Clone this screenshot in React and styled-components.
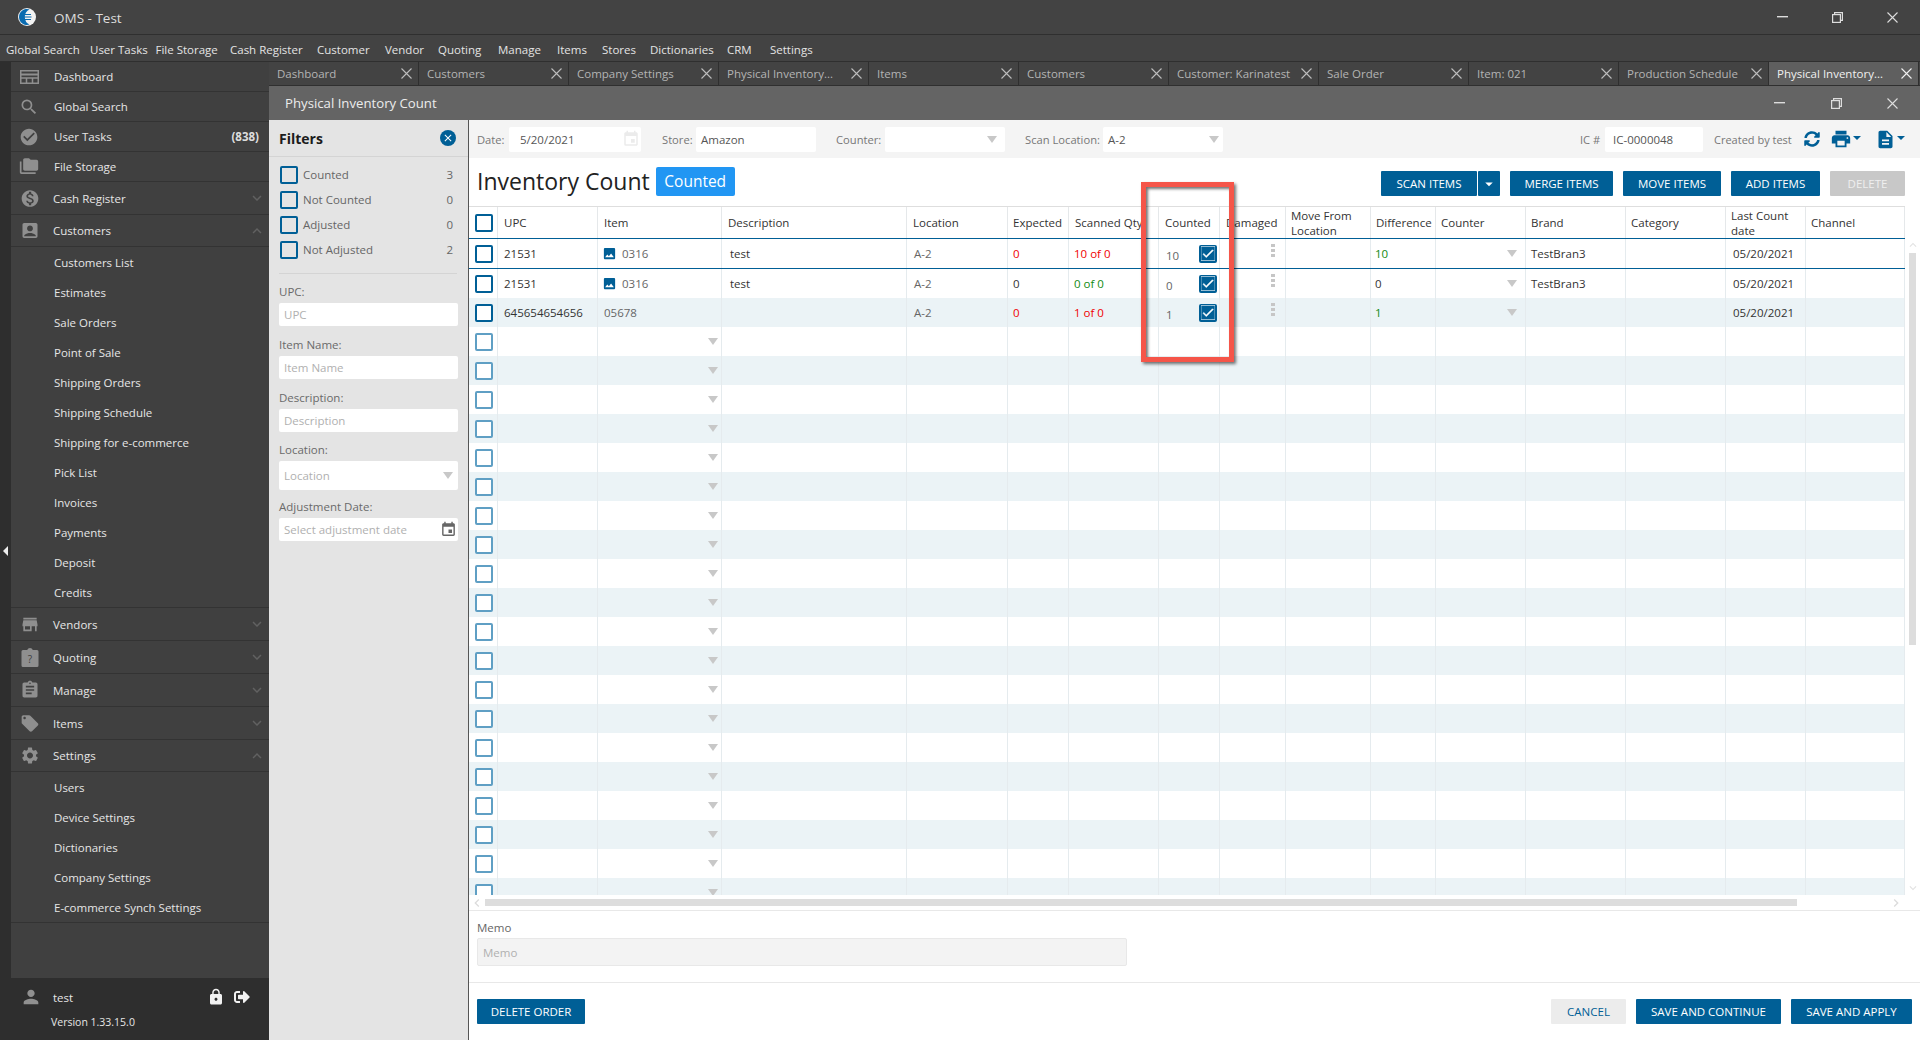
import React from "react";
import styled, { createGlobalStyle } from "styled-components";
import {
  MdSearch,
  MdCheckCircle,
  MdFolderCopy,
  MdMonetizationOn,
  MdAccountBox,
  MdStore,
  MdAssignment,
  MdLocalOffer,
  MdSettings,
  MdPerson,
  MdLock,
  MdPrint,
  MdDescription,
  MdImage,
  MdCheck,
  MdClose,
  MdEvent,
  MdExpandMore,
  MdExpandLess,
  MdChevronLeft,
  MdChevronRight,
  MdArrowDropDown,
} from "react-icons/md";
import { FaSignOutAlt, FaSyncAlt } from "react-icons/fa";

const BLUE = "#005f96";

const GlobalStyle = createGlobalStyle`
  html, body {
    margin: 0;
    padding: 0;
    height: 100%;
    overflow: hidden;
    background: #404040;
  }
  * {
    box-sizing: border-box;
  }
  body {
    font-family: "Open Sans", "Noto Sans", sans-serif;
    font-size: 11.5px;
    color: #333;
  }
`;

const Page = styled.div`
  width: 1920px;
  height: 1040px;
  display: flex;
  flex-direction: column;
  overflow: hidden;
  position: relative;
`;

const TitleBar = styled.div`
  height: 35px;
  flex: none;
  background: #434343;
  border-bottom: 1px solid #2f2f2f;
  display: flex;
  align-items: center;
  padding-left: 18px;
  color: #ddd;
  font-size: 13.5px;
`;

const AppName = styled.span`
  margin-left: 18px;
  padding-top: 1px;
  flex: 1;
`;

const WinButton = styled.button`
  width: ${(p) => p.$w}px;
  height: 30px;
  padding: 0;
  border: 0;
  background: transparent;
  color: #ddd;
  display: flex;
  align-items: center;
  justify-content: center;
`;

const WinControls = styled.div`
  display: flex;
`;

const MenuBar = styled.div`
  height: 27px;
  flex: none;
  background: #434343;
  border-bottom: 1px solid #2f2f2f;
  display: flex;
  align-items: center;
  padding: 2px 0 0 6px;
  color: #e4e4e4;
`;

const MenuItem = styled.span`
  width: ${(p) => p.$w}px;
  flex: none;
  white-space: nowrap;
`;

const Body = styled.div`
  flex: 1;
  min-height: 0;
  display: flex;
`;

const Sidebar = styled.aside`
  width: 269px;
  flex: none;
  display: flex;
  flex-direction: column;
  background: #404040;
  border-left: 11px solid #2e2e2e;
  position: relative;
`;

const NavList = styled.div`
  flex: 1;
  min-height: 0;
`;

const NavRow = styled.div`
  height: ${(p) => p.$h}px;
  display: flex;
  align-items: center;
  padding-left: ${(p) => (p.$h > 30 ? 9 : 8)}px;
  border-bottom: 1px solid #333;
  color: #e6e6e6;
`;

const NavIcon = styled.span`
  width: 20px;
  height: 20px;
  flex: none;
  display: flex;
  align-items: center;
  justify-content: center;
  color: #8f8f8f;
  margin-right: ${(p) => (p.$wide ? 13 : 15)}px;
`;

const NavLabel = styled.span`
  flex: 1;
`;

const NavCount = styled.span`
  font-weight: 700;
  color: #ddd;
  margin-right: 10px;
`;

const NavChevron = styled.span`
  color: #616161;
  display: flex;
  margin-right: 3px;
`;

const SubList = styled.div`
  border-bottom: 1px solid #333;
`;

const SubItem = styled.div`
  height: 30px;
  display: flex;
  align-items: center;
  padding-left: 43px;
  color: #e6e6e6;
`;

const Collapse = styled.div`
  position: absolute;
  left: -8px;
  top: 484px;
  width: 0;
  height: 0;
  border-top: 5px solid transparent;
  border-bottom: 5px solid transparent;
  border-right: 5px solid #eee;
`;

const UserBox = styled.div`
  height: 62px;
  flex: none;
  margin-left: -11px;
  background: #2e2e2e;
  color: #e6e6e6;
  padding: 8px 19px 0 20px;
  display: flex;
  flex-wrap: wrap;
  align-items: center;
  align-content: flex-start;
`;

const UserName = styled.span`
  margin-left: 11px;
  flex: 1;
`;

const UserActions = styled.div`
  display: flex;
  align-items: center;
  gap: 9px;
  color: #f2f2f2;
`;

const Version = styled.div`
  width: 100%;
  padding: 7px 0 0 31px;
  font-size: 10.5px;
`;

const Content = styled.div`
  flex: 1;
  min-width: 0;
  display: flex;
  flex-direction: column;
`;

const TabBar = styled.div`
  height: 24px;
  flex: none;
  display: flex;
  background: #434343;
  border-bottom: 1px solid #2f2f2f;
`;

const Tab = styled.div`
  width: 150px;
  flex: none;
  display: flex;
  align-items: center;
  justify-content: space-between;
  padding: 0 6px 0 8px;
  border-right: 1px solid #2f2f2f;
  background: ${(p) => (p.$active ? "#5f5f5f" : "#434343")};
  color: ${(p) => (p.$active ? "#f0f0f0" : "#b4b4b4")};
  svg {
    color: ${(p) => (p.$active ? "#f0f0f0" : "#bdbdbd")};
  }
`;

const WinTitle = styled.div`
  height: 34px;
  flex: none;
  background: #646464;
  color: #ececec;
  font-size: 13.2px;
  display: flex;
  align-items: center;
  padding-left: 16px;
`;

const WinTitleText = styled.span`
  flex: 1;
`;

const WinBody = styled.div`
  flex: 1;
  min-height: 0;
  display: flex;
`;

const Filters = styled.div`
  width: 200px;
  flex: none;
  background: #e4e4e4;
  border-right: 1px solid #555;
  color: #666;
`;

const FilterHead = styled.div`
  height: 37px;
  border-bottom: 1px solid #d4d4d4;
  display: flex;
  align-items: center;
  justify-content: space-between;
  padding: 0 12px 0 10px;
  font-size: 14px;
  font-weight: 700;
  color: #1c1c1c;
`;

const CloseDot = styled.span`
  width: 16px;
  height: 16px;
  border-radius: 50%;
  background: ${BLUE};
  color: #fff;
  display: flex;
  align-items: center;
  justify-content: center;
`;

const FilterChecks = styled.div`
  margin: 0 11px 0 10px;
  padding: 5px 0 11px;
  border-bottom: 1px solid #d4d4d4;
`;

const FilterRow = styled.div`
  height: 25px;
  display: flex;
  align-items: center;
  gap: 5px;
  padding: 0 4px 0 1px;
`;

const FilterName = styled.span`
  flex: 1;
`;

const FilterFields = styled.div`
  padding: 7px 10px 0;
`;

const FieldLabel = styled.div`
  height: ${(p) => p.$h || 20}px;
  margin-bottom: 2px;
  display: flex;
  align-items: center;
  color: #6a6a6a;
`;

const FilterInput = styled.div`
  height: ${(p) => p.$h || 23}px;
  margin-bottom: ${(p) => p.$mb ?? 8}px;
  background: #fff;
  border-radius: 2px;
  display: flex;
  align-items: center;
  justify-content: space-between;
  padding: 0 ${(p) => p.$pr ?? 5}px 0 5px;
  color: #b0b0b0;
`;

const Main = styled.div`
  flex: 1;
  min-width: 0;
  display: flex;
  flex-direction: column;
  background: #fff;
`;

const Toolbar = styled.div`
  height: 38px;
  flex: none;
  background: #f4f4f4;
  display: flex;
  align-items: center;
  padding: 0 15px 0 8px;
`;

const ToolLabel = styled.span`
  width: ${(p) => p.$w}px;
  flex: none;
  color: #777;
  font-size: 11.2px;
  white-space: nowrap;
  margin-left: ${(p) => p.$ml || 0}px;
`;

const ToolInput = styled.div`
  width: ${(p) => p.$w}px;
  height: 25px;
  flex: none;
  background: #fff;
  border-radius: 2px;
  display: flex;
  align-items: center;
  justify-content: space-between;
  padding: 0 ${(p) => p.$pr ?? 4}px 0 ${(p) => p.$pl || 5}px;
  color: #555;
`;

const ToolEnd = styled.div`
  margin-left: auto;
  display: flex;
  align-items: center;
`;

const Created = styled.span`
  width: 77px;
  flex: none;
  white-space: nowrap;
  color: #777;
  font-size: 11px;
  margin: 0 13px 0 11px;
`;

const ToolIcon = styled.span`
  color: ${BLUE};
  display: flex;
  align-items: center;
  margin-left: ${(p) => p.$ml || 0}px;
`;

const Caret = styled.span`
  width: 0;
  height: 0;
  border-left: 4px solid transparent;
  border-right: 4px solid transparent;
  border-top: 4px solid ${BLUE};
  margin: -2px 0 0 1px;
`;

const HeadRow = styled.div`
  height: 48px;
  flex: none;
  display: flex;
  align-items: center;
  padding: 0 15px 2px 8px;
`;

const Heading = styled.h1`
  margin: 0;
  font-size: 23px;
  font-weight: 400;
  color: #222;
`;

const Badge = styled.span`
  width: 79px;
  height: 29px;
  margin-left: 6px;
  border-radius: 2px;
  background: #2196f3;
  color: #fff;
  font-size: 15.5px;
  display: flex;
  align-items: center;
  justify-content: center;
`;

const Actions = styled.div`
  margin-left: auto;
  align-self: flex-start;
  margin-top: 13px;
  display: flex;
  gap: 10px;
`;

const SplitButton = styled.div`
  display: flex;
  gap: 1px;
`;

const Button = styled.button`
  height: 25px;
  width: ${(p) => p.$w}px;
  padding: 0;
  border: 0;
  border-radius: 1px;
  font-family: inherit;
  font-size: 11.5px;
  display: flex;
  align-items: center;
  justify-content: center;
  background: ${(p) => (p.$ghost ? "#ececec" : p.$off ? "#c8c8c8" : BLUE)};
  color: ${(p) => (p.$ghost ? BLUE : p.$off ? "#efefef" : "#fff")};
`;

const TableArea = styled.div`
  flex: 1;
  min-height: 0;
  display: flex;
`;

const Table = styled.div`
  width: 1436px;
  flex: none;
  overflow: hidden;
`;

const GRID =
  "29px 100px 124px 185px 101px 61px 90px 61px 66px 85px 65px 90px 100px 100px 80px 99px";

const HeaderRow = styled.div`
  display: grid;
  grid-template-columns: ${GRID};
  height: 33px;
  border-top: 1px solid #dedede;
  border-bottom: 1px solid ${BLUE};
  color: #333;
`;

const HeaderCell = styled.div`
  display: flex;
  align-items: center;
  padding: 0 ${(p) => (p.$nowrap ? 0 : 4)}px 0 ${(p) => (p.$tight ? 5 : 6)}px;
  line-height: 15px;
  border-right: 1px solid #e5e8ea;
  white-space: ${(p) => (p.$nowrap ? "nowrap" : "normal")};
`;

const Row = styled.div`
  display: grid;
  grid-template-columns: ${GRID};
  height: ${(p) => p.$h || 29}px;
  background: ${(p) => (p.$odd ? "#ebf3f6" : "#fff")};
  border-bottom: ${(p) => (p.$line ? `1px solid ${BLUE}` : "0")};
`;

const Cell = styled.div`
  display: flex;
  align-items: center;
  justify-content: ${(p) => (p.$end ? "flex-end" : "flex-start")};
  padding: 0 ${(p) => p.$end ?? 4}px 0 ${(p) => p.$pl ?? 5}px;
  border-right: 1px solid #e5ebee;
  color: ${(p) => p.$color || "#333"};
  white-space: nowrap;
`;

const CheckCell = styled(Cell)`
  padding: 0 0 0 6px;
`;

const Box = styled.span`
  width: 18px;
  height: 18px;
  flex: none;
  border: 2px solid ${(p) => (p.$soft ? "#5f9fc4" : BLUE)};
  border-radius: 2px;
  background: ${(p) => (p.$checked ? BLUE : p.$clear ? "transparent" : "#fff")};
  color: #fff;
  display: flex;
  align-items: center;
  justify-content: center;
`;

const CountCell = styled(Cell)`
  justify-content: space-between;
  padding: 0 2px 0 7px;
  color: #666;
`;

const CountValue = styled.span`
  padding-top: 4px;
`;

const ItemIcon = styled.span`
  color: ${BLUE};
  display: flex;
  margin-right: 5px;
`;

const Arrow = styled.span`
  width: 0;
  height: 0;
  border-left: 5px solid transparent;
  border-right: 5px solid transparent;
  border-top: 7px solid #c8c8c8;
`;

const Dots = styled.span`
  width: 4px;
  height: 13px;
  margin: -6px 6px 0 auto;
  background: repeating-linear-gradient(#c6c6c6 0 3px, transparent 3px 5px);
`;

const VScroll = styled.div`
  flex: 1;
  display: flex;
  flex-direction: column;
  align-items: center;
  padding-top: 32px;
  color: #e2e2e2;
`;

const VThumb = styled.div`
  width: 7px;
  height: 392px;
  background: #ddd;
  margin: 1px 0 auto;
`;

const HScroll = styled.div`
  height: 16px;
  flex: none;
  display: flex;
  align-items: center;
  color: #dcdcdc;
  padding: 0 16px 0 0;
  border-bottom: 1px solid #e8e8e8;
`;

const HTrack = styled.div`
  flex: 1;
  height: 7px;
  display: flex;
`;

const HThumb = styled.div`
  width: 1312px;
  background: #ddd;
`;

const MemoBox = styled.div`
  height: 72px;
  flex: none;
  padding: 8px 0 0 8px;
  border-bottom: 1px solid #e8e8e8;
  color: #666;
`;

const MemoLabel = styled.div`
  height: 19px;
  padding-bottom: 2px;
  display: flex;
  align-items: center;
`;

const MemoInput = styled.div`
  width: 650px;
  height: 28px;
  background: #f3f3f3;
  border: 1px solid #e8e8e8;
  border-radius: 2px;
  display: flex;
  align-items: center;
  padding-left: 5px;
  color: #b0b0b0;
`;

const Footer = styled.div`
  height: 57px;
  flex: none;
  display: flex;
  align-items: flex-start;
  padding: 16px 8px 0;
  gap: 10px;
`;

const Spacer = styled.span`
  flex: 1;
`;

const Callout = styled.div`
  position: absolute;
  left: 1141px;
  top: 182px;
  width: 93px;
  height: 180px;
  border: 5px solid #f55549;
  box-shadow: 2px 2px 3px rgba(0, 0, 0, 0.55), inset 2px 2px 3px rgba(0, 0, 0, 0.55);
  pointer-events: none;
`;

const DashboardIcon = () => (
  <svg width="19" height="14" viewBox="0 0 19 14" fill="none" stroke="#8f8f8f" strokeWidth="1.5">
    <rect x="0.75" y="0.75" width="17.5" height="12.5" />
    <path d="M1 4.5h17" strokeWidth="2" />
    <path d="M6.5 8v5M12.5 8v5M1 8h17" />
  </svg>
);

const QuoteIcon = () => (
  <svg width="18" height="20" viewBox="0 0 18 20">
    <path d="M2 3h4.2a3 3 0 0 1 5.6 0H16a1.5 1.5 0 0 1 1.5 1.5v14A1.5 1.5 0 0 1 16 20H2a1.5 1.5 0 0 1-1.5-1.5v-14A1.5 1.5 0 0 1 2 3z" fill="#8f8f8f" />
    <text x="9" y="16" textAnchor="middle" fontSize="10" fontFamily="Open Sans, sans-serif" fill="#404040">?</text>
  </svg>
);

const Logo = () => (
  <svg width="18" height="18" viewBox="0 0 18 18">
    <circle cx="9" cy="9" r="9" fill="#f2f2f2" />
    <path d="M11.5 1.4A8 8 0 1 0 11.5 16.6 8.5 8.5 0 0 1 11.5 1.4z" fill="#0a6bb0" />
    <path d="M6 6.5h7M4.5 9h9M6 11.5h7" stroke="#0a6bb0" strokeWidth="1.2" />
  </svg>
);

const RestoreIcon = () => (
  <svg width="11" height="11" viewBox="0 0 11 11" fill="none" stroke="currentColor" strokeWidth="1.2">
    <rect x="0.6" y="2.6" width="7.8" height="7.8" />
    <path d="M2.6 2.6V.6h7.8v7.8H8.4" />
  </svg>
);

const CloseIcon = () => (
  <svg width="11" height="11" viewBox="0 0 11 11" stroke="currentColor" strokeWidth="1.1">
    <path d="M.5.5l10 10M10.5.5l-10 10" />
  </svg>
);

const MinIcon = () => (
  <svg width="11" height="2" viewBox="0 0 11 2">
    <rect width="11" height="1.4" fill="currentColor" />
  </svg>
);

const WindowButtons = ({ size }) => (
  <WinControls>
    <WinButton $w={size}><MinIcon /></WinButton>
    <WinButton $w={size}><RestoreIcon /></WinButton>
    <WinButton $w={55}><CloseIcon /></WinButton>
  </WinControls>
);

const MENU = [
  ["Global Search", 84],
  ["User Tasks", 65.5],
  ["File Storage", 74.5],
  ["Cash Register", 87],
  ["Customer", 68],
  ["Vendor", 53],
  ["Quoting", 60],
  ["Manage", 59],
  ["Items", 45],
  ["Stores", 48],
  ["Dictionaries", 77],
  ["CRM", 43],
  ["Settings", 60],
];

const TABS = ["Dashboard", "Customers", "Company Settings", "Physical Inventory...", "Items", "Customers", "Customer: Karinatest", "Sale Order", "Item: 021", "Production Schedule", "Physical Inventory..."];

const CUSTOMER_SUBS = ["Customers List", "Estimates", "Sale Orders", "Point of Sale", "Shipping Orders", "Shipping Schedule", "Shipping for e-commerce", "Pick List", "Invoices", "Payments", "Deposit", "Credits"];

const SETTING_SUBS = ["Users", "Device Settings", "Dictionaries", "Company Settings", "E-commerce Synch Settings"];

const FILTER_ROWS = [["Counted", 3], ["Not Counted", 0], ["Adjusted", 0], ["Not Adjusted", 2]];

const HEADERS = ["UPC", "Item", "Description", "Location", "Expected", "Scanned Qty", "Counted", "Damaged", "Move From Location", "Difference", "Counter", "Brand", "Category", "Last Count date", "Channel"];

// these header labels sit a pixel closer to their column line
const TIGHT = ["Expected", "Move From Location", "Difference", "Counter", "Brand", "Category", "Last Count date", "Channel"];

const RED = "#f00000";
const GREEN = "#118a11";

const DATA = [
  { upc: "21531", image: true, item: "0316", desc: "test", expected: "0", expectedColor: RED, scanned: "10 of 0", scannedColor: RED, counted: "10", diff: "10", diffColor: GREEN, brand: "TestBran3", h: 30, line: true },
  { upc: "21531", image: true, item: "0316", desc: "test", expected: "0", expectedColor: "#333", scanned: "0 of 0", scannedColor: GREEN, counted: "0", diff: "0", diffColor: "#333", brand: "TestBran3" },
  { upc: "645654654656", item: "05678", desc: "", expected: "0", expectedColor: RED, scanned: "1 of 0", scannedColor: RED, counted: "1", diff: "1", diffColor: GREEN, brand: "", odd: true },
];

const NavEntry = ({ icon, label, h = 30, count, open, wide }) => (
  <NavRow $h={h}>
    <NavIcon $wide={wide}>{icon}</NavIcon>
    <NavLabel>{label}</NavLabel>
    {count && <NavCount>{count}</NavCount>}
    {open !== undefined && (
      <NavChevron>{open ? <MdExpandLess size={18} /> : <MdExpandMore size={18} />}</NavChevron>
    )}
  </NavRow>
);

const FilledRow = ({ row }) => (
  <Row $h={row.h} $odd={row.odd} $line={row.line}>
    <CheckCell><Box /></CheckCell>
    <Cell $pl={6}>{row.upc}</Cell>
    <Cell $color="#666" $pl={row.image ? 4 : 6}>
      {row.image && <ItemIcon><MdImage size={15} /></ItemIcon>}
      {row.item}
    </Cell>
    <Cell $pl={8}>{row.desc}</Cell>
    <Cell $color="#666" $pl={7}>A-2</Cell>
    <Cell $color={row.expectedColor}>{row.expected}</Cell>
    <Cell $color={row.scannedColor}>{row.scanned}</Cell>
    <CountCell>
      <CountValue>{row.counted}</CountValue>
      <Box $checked><MdCheck size={17} stroke="currentColor" strokeWidth={1} /></Box>
    </CountCell>
    <Cell><Dots /></Cell>
    <Cell />
    <Cell $pl={4} $color={row.diffColor}>{row.diff}</Cell>
    <Cell $end={8}><Arrow /></Cell>
    <Cell>{row.brand}</Cell>
    <Cell />
    <Cell $pl={7}>05/20/2021</Cell>
    <Cell />
  </Row>
);

const EmptyRow = ({ odd }) => (
  <Row $odd={odd}>
    <CheckCell><Box $soft /></CheckCell>
    <Cell />
    <Cell $end={3}><Arrow /></Cell>
    {Array.from({ length: 13 }, (_, i) => <Cell key={i} />)}
  </Row>
);

export default function App() {
  return (
    <Page>
      <GlobalStyle />
      <TitleBar>
        <Logo />
        <AppName>OMS - Test</AppName>
        <WindowButtons size={55} />
      </TitleBar>
      <MenuBar>
        {MENU.map(([m, w]) => <MenuItem key={m} $w={w}>{m}</MenuItem>)}
      </MenuBar>
      <Body>
        <Sidebar>
          <Collapse />
          <NavList>
            <NavEntry icon={<DashboardIcon />} label="Dashboard" />
            <NavEntry icon={<MdSearch size={22} />} label="Global Search" />
            <NavEntry icon={<MdCheckCircle size={22} />} label="User Tasks" count="(838)" />
            <NavEntry icon={<MdFolderCopy size={21} />} label="File Storage" />
            <NavEntry icon={<MdMonetizationOn size={23} />} label="Cash Register" h={33} open={false} wide />
            <NavEntry icon={<MdAccountBox size={23} />} label="Customers" h={32} open wide />
            <SubList>
              {CUSTOMER_SUBS.map((s) => <SubItem key={s}>{s}</SubItem>)}
            </SubList>
            <NavEntry icon={<MdStore size={23} />} label="Vendors" h={33} open={false} wide />
            <NavEntry icon={<QuoteIcon />} label="Quoting" h={33} open={false} wide />
            <NavEntry icon={<MdAssignment size={22} />} label="Manage" h={33} open={false} wide />
            <NavEntry icon={<MdLocalOffer size={21} />} label="Items" h={33} open={false} wide />
            <NavEntry icon={<MdSettings size={23} />} label="Settings" h={32} open wide />
            <SubList>
              {SETTING_SUBS.map((s) => <SubItem key={s}>{s}</SubItem>)}
            </SubList>
          </NavList>
          <UserBox>
            <MdPerson size={22} color="#909090" />
            <UserName>test</UserName>
            <UserActions>
              <MdLock size={18} />
              <FaSignOutAlt size={16} />
            </UserActions>
            <Version>Version 1.33.15.0</Version>
          </UserBox>
        </Sidebar>
        <Content>
          <TabBar>
            {TABS.map((t, i) => (
              <Tab key={i} $active={i === TABS.length - 1}>
                <span>{t}</span>
                <CloseIcon />
              </Tab>
            ))}
          </TabBar>
          <WinTitle>
            <WinTitleText>Physical Inventory Count</WinTitleText>
            <WindowButtons size={57} />
          </WinTitle>
          <WinBody>
            <Filters>
              <FilterHead>
                Filters
                <CloseDot><MdClose size={12} /></CloseDot>
              </FilterHead>
              <FilterChecks>
                {FILTER_ROWS.map(([name, n]) => (
                  <FilterRow key={name}>
                    <Box $clear />
                    <FilterName>{name}</FilterName>
                    <span>{n}</span>
                  </FilterRow>
                ))}
              </FilterChecks>
              <FilterFields>
                <FieldLabel>UPC:</FieldLabel>
                <FilterInput>UPC</FilterInput>
                <FieldLabel>Item Name:</FieldLabel>
                <FilterInput>Item Name</FilterInput>
                <FieldLabel>Description:</FieldLabel>
                <FilterInput>Description</FilterInput>
                <FieldLabel $h={19}>Location:</FieldLabel>
                <FilterInput $h={29} $mb={7}>Location<Arrow /></FilterInput>
                <FieldLabel $h={19}>Adjustment Date:</FieldLabel>
                <FilterInput $mb={0} $pr={1}>
                  Select adjustment date
                  <MdEvent size={17} color="#666" />
                </FilterInput>
              </FilterFields>
            </Filters>
            <Main>
              <Toolbar>
                <ToolLabel $w={32}>Date:</ToolLabel>
                <ToolInput $w={132} $pl={11} $pr={1}>5/20/2021<MdEvent size={18} color="#ebebeb" /></ToolInput>
                <ToolLabel $w={34} $ml={21}>Store:</ToolLabel>
                <ToolInput $w={120}>Amazon</ToolInput>
                <ToolLabel $w={49} $ml={20}>Counter:</ToolLabel>
                <ToolInput $w={120} $pr={8}><span /><Arrow /></ToolInput>
                <ToolLabel $w={78} $ml={20}>Scan Location:</ToolLabel>
                <ToolInput $w={120}>A-2<Arrow /></ToolInput>
                <ToolEnd>
                  <ToolLabel $w={25}>IC #</ToolLabel>
                  <ToolInput $w={98} $pl={8}>IC-0000048</ToolInput>
                  <Created>Created by test</Created>
                  <ToolIcon><FaSyncAlt size={16} /></ToolIcon>
                  <ToolIcon $ml={10}><MdPrint size={22} /><Caret /></ToolIcon>
                  <ToolIcon $ml={14}><MdDescription size={21} /><Caret /></ToolIcon>
                </ToolEnd>
              </Toolbar>
              <HeadRow>
                <Heading>Inventory Count</Heading>
                <Badge>Counted</Badge>
                <Actions>
                  <SplitButton>
                    <Button $w={96}>SCAN ITEMS</Button>
                    <Button $w={22}><MdArrowDropDown size={18} /></Button>
                  </SplitButton>
                  <Button $w={103}>MERGE ITEMS</Button>
                  <Button $w={98}>MOVE ITEMS</Button>
                  <Button $w={89}>ADD ITEMS</Button>
                  <Button $w={75} $off>DELETE</Button>
                </Actions>
              </HeadRow>
              <TableArea>
                <Table>
                  <HeaderRow>
                    <HeaderCell><Box /></HeaderCell>
                    {HEADERS.map((h) => (
                      <HeaderCell key={h} $nowrap={h === "Scanned Qty"} $tight={TIGHT.includes(h)}>{h}</HeaderCell>
                    ))}
                  </HeaderRow>
                  {DATA.map((row, i) => <FilledRow key={i} row={row} />)}
                  {Array.from({ length: 21 }, (_, i) => <EmptyRow key={i} odd={i % 2 === 1} />)}
                </Table>
                <VScroll>
                  <MdExpandLess size={14} />
                  <VThumb />
                  <MdExpandMore size={14} />
                </VScroll>
              </TableArea>
              <HScroll>
                <MdChevronLeft size={16} />
                <HTrack><HThumb /></HTrack>
                <MdChevronRight size={16} />
              </HScroll>
              <MemoBox>
                <MemoLabel>Memo</MemoLabel>
                <MemoInput>Memo</MemoInput>
              </MemoBox>
              <Footer>
                <Button $w={108}>DELETE ORDER</Button>
                <Spacer />
                <Button $w={75} $ghost>CANCEL</Button>
                <Button $w={145}>SAVE AND CONTINUE</Button>
                <Button $w={121}>SAVE AND APPLY</Button>
              </Footer>
            </Main>
          </WinBody>
        </Content>
      </Body>
      <Callout />
    </Page>
  );
}
